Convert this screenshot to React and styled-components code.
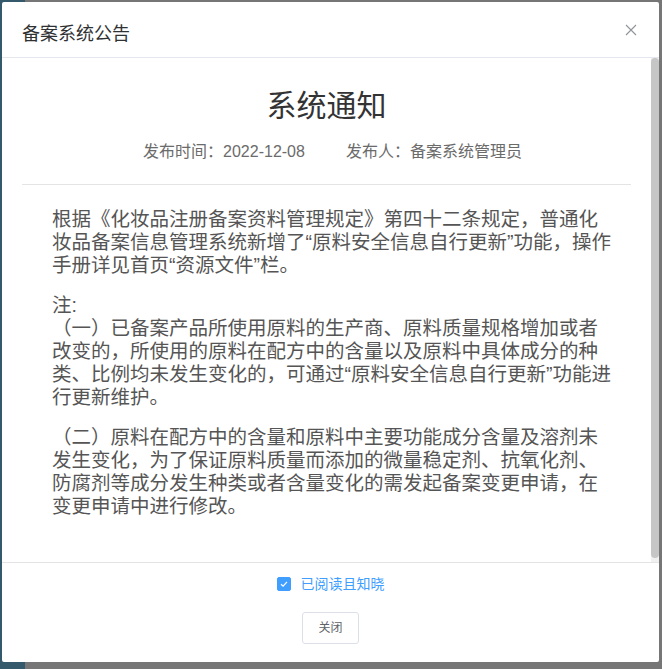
import React, { useState } from 'react'
import styled, { createGlobalStyle } from 'styled-components'

const GlobalStyle = createGlobalStyle`
  html, body {
    margin: 0;
    padding: 0;
    height: 100%;
  }
  body {
    background: linear-gradient(to right, #33596b 0, #33596b 25px, #767676 25px);
    font-family: "Liberation Sans", "Noto Sans CJK SC", sans-serif;
  }
`

const Backdrop = styled.div`
  padding: 2px 3px 7px 2px;
  height: 669px;
  box-sizing: border-box;
  display: flex;
`

const Dialog = styled.div`
  flex: 1;
  background: #fff;
  border-radius: 2px;
  display: flex;
  flex-direction: column;
  overflow: hidden;
`

const Header = styled.div`
  position: relative;
  padding: 20px 20px 11px;
  border-bottom: 1px solid #e4e7ed;
`

const HeaderTitle = styled.span`
  font-size: 18px;
  line-height: 24px;
  color: #303133;
`

const CloseButton = styled.button`
  position: absolute;
  top: 22px;
  right: 22px;
  width: 12px;
  height: 12px;
  padding: 0;
  border: 0;
  background: none;
  cursor: pointer;
  display: flex;
  svg { display: block; }
`

const Body = styled.div`
  flex: 1;
  min-height: 0;
  display: flex;
`

const Scroller = styled.div`
  flex: 1;
  overflow: hidden;
  padding: 0 20px;
`

const Rail = styled.div`
  width: 8px;
  background: #f1f1f1;
  padding-bottom: 4px;
  display: flex;
`

const Thumb = styled.div`
  flex: 1;
  background: #c6c6c6;
  border-radius: 4px;
`

const NoticeTitle = styled.h2`
  margin: 0;
  padding-top: 28px;
  text-align: center;
  font-size: 30px;
  font-weight: 400;
  line-height: 40px;
  color: #333;
`

const Meta = styled.div`
  display: flex;
  justify-content: center;
  gap: 41px;
  margin-top: 14px;
  padding: 0 0 20px 12px;
  border-bottom: 1px solid #e4e4e4;
  font-size: 16px;
  line-height: 24px;
  color: #6b6b6b;
`

const Content = styled.div`
  padding: 23px 17px 20px 30px;
  font-size: 19.5px;
  line-height: 23px;
  color: #555;

  p {
    margin: 0 0 17px;
  }
`

const Footer = styled.div`
  border-top: 1px solid #e4e4e4;
  padding: 11px 20px 18px;
  display: flex;
  flex-direction: column;
  align-items: center;
  gap: 18px;
`

const Agree = styled.label`
  display: flex;
  align-items: center;
  gap: 10px;
  font-size: 14px;
  line-height: 20px;
  color: ${(p) => (p.$checked ? '#409eff' : '#606266')};
  cursor: pointer;
`

const Box = styled.span`
  width: 14px;
  height: 14px;
  border-radius: 2px;
  box-sizing: border-box;
  border: 1px solid ${(p) => (p.$checked ? '#409eff' : '#dcdfe6')};
  background: ${(p) => (p.$checked ? '#409eff' : '#fff')};
  display: flex;
  align-items: center;
  justify-content: center;
`

const Button = styled.button`
  font-family: inherit;
  font-size: 12px;
  line-height: 12px;
  color: #606266;
  background: #fff;
  border: 1px solid #dcdfe6;
  border-radius: 3px;
  padding: 9px 15px;
  cursor: pointer;
`

export default function App() {
  const [checked, setChecked] = useState(true)
  return (
    <>
      <GlobalStyle />
      <Backdrop>
        <Dialog>
          <Header>
            <HeaderTitle>备案系统公告</HeaderTitle>
            <CloseButton aria-label="关闭">
              <svg width="12" height="12" viewBox="0 0 12 12">
                <path d="M1 1L11 11M11 1L1 11" stroke="#909399" strokeWidth="1.1" fill="none" />
              </svg>
            </CloseButton>
          </Header>
          <Body>
            <Scroller>
              <NoticeTitle>系统通知</NoticeTitle>
              <Meta>
                <span>发布时间：2022-12-08</span>
                <span>发布人：备案系统管理员</span>
              </Meta>
              <Content>
                <p>根据《化妆品注册备案资料管理规定》第四十二条规定，普通化妆品备案信息管理系统新增了“原料安全信息自行更新”功能，操作手册详见首页“资源文件”栏。</p>
                <p>
                  注:
                  <br />
                  （一）已备案产品所使用原料的生产商、原料质量规格增加或者改变的，所使用的原料在配方中的含量以及原料中具体成分的种类、比例均未发生变化的，可通过“原料安全信息自行更新”功能进行更新维护。
                </p>
                <p>（二）原料在配方中的含量和原料中主要功能成分含量及溶剂未发生变化，为了保证原料质量而添加的微量稳定剂、抗氧化剂、防腐剂等成分发生种类或者含量变化的需发起备案变更申请，在变更申请中进行修改。</p>
              </Content>
            </Scroller>
            <Rail>
              <Thumb />
            </Rail>
          </Body>
          <Footer>
            <Agree $checked={checked} onClick={() => setChecked(!checked)}>
              <Box $checked={checked}>
                {checked && (
                  <svg width="8" height="8" viewBox="0 0 8 8">
                    <path d="M1 4.2L3.1 6.2L7 1.8" stroke="#fff" strokeWidth="1.2" fill="none" />
                  </svg>
                )}
              </Box>
              已阅读且知晓
            </Agree>
            <Button>关闭</Button>
          </Footer>
        </Dialog>
      </Backdrop>
    </>
  )
}
